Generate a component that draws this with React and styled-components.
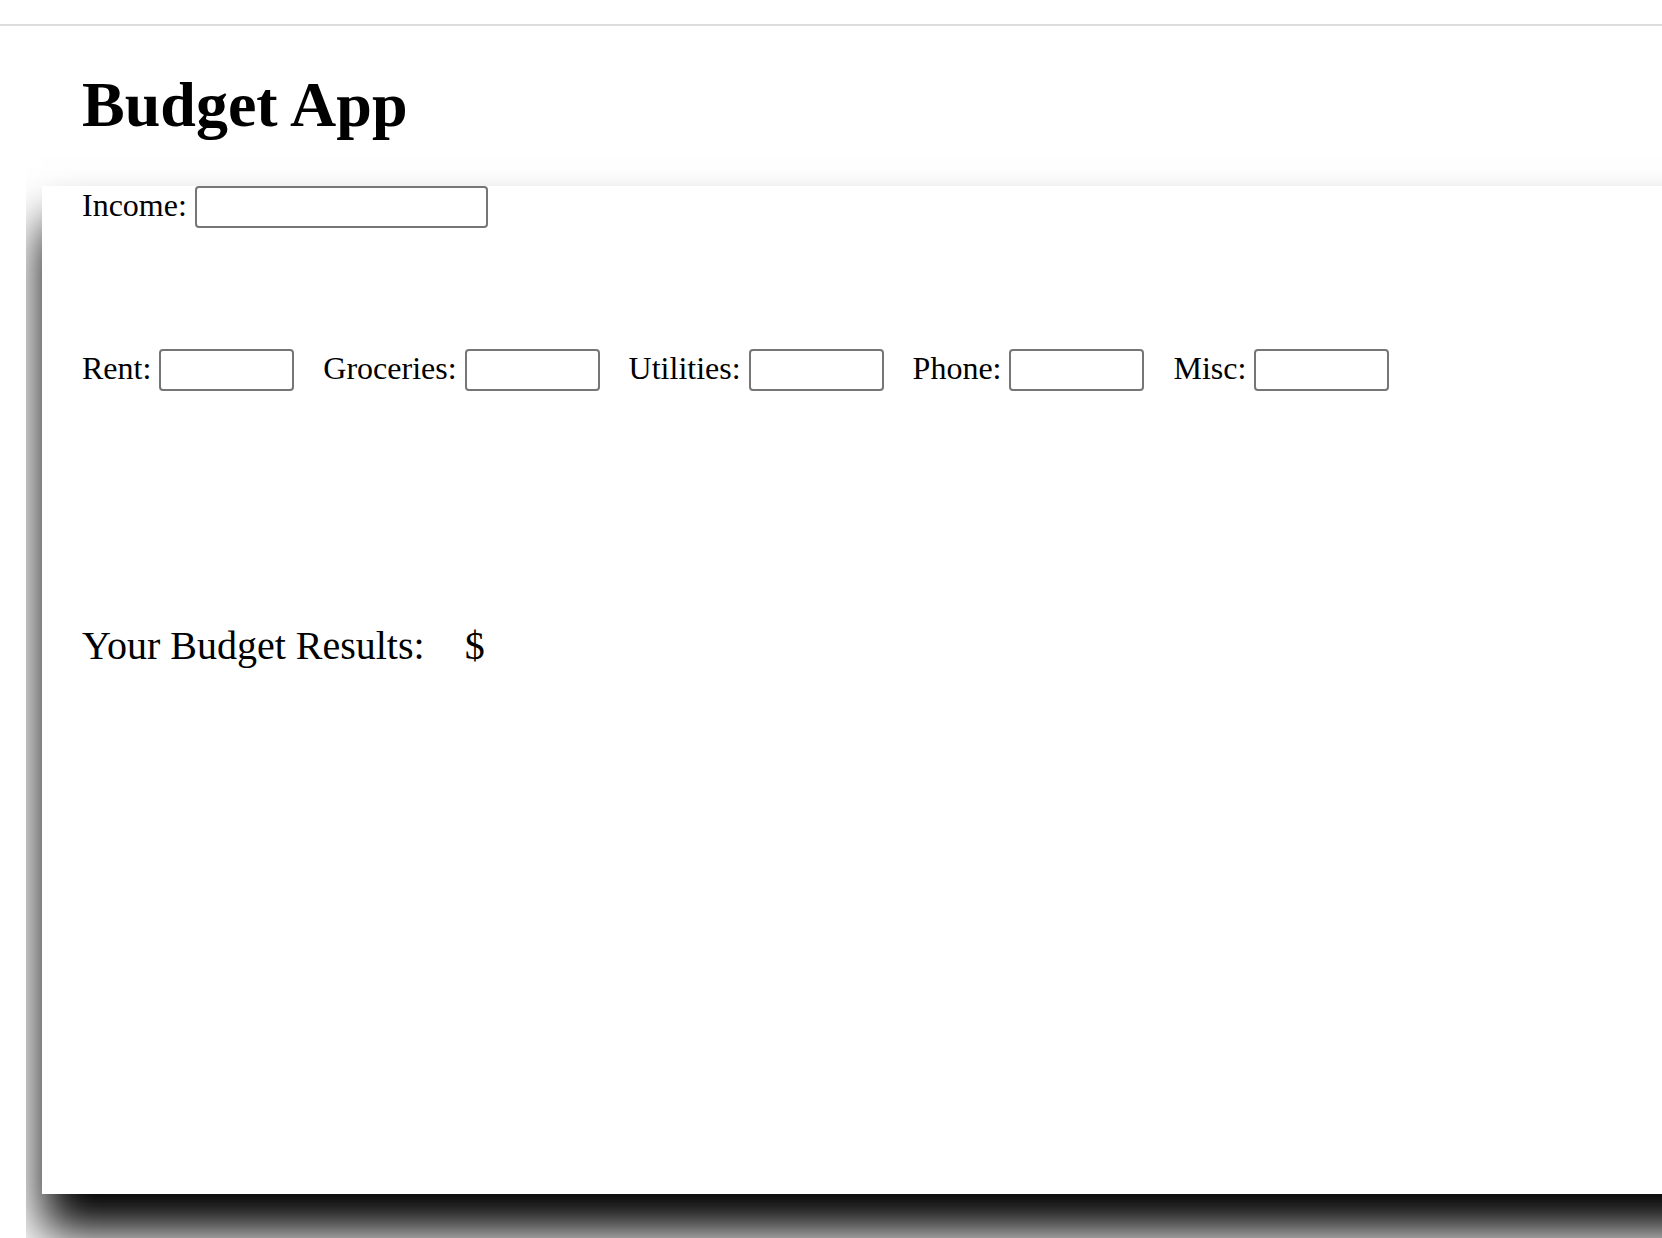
import React from 'react';
import styled, { createGlobalStyle } from 'styled-components';

const Global = createGlobalStyle`
  html, body {
    margin: 0;
    padding: 0;
    background: #ffffff;
    overflow: hidden;
  }
  body {
    font-family: "Liberation Serif", "Times New Roman", serif;
    color: #000000;
  }
`;

const Page = styled.div`
  display: flex;
  flex-direction: column;
  height: 1238px;
  overflow: hidden;
`;

const TopBar = styled.div`
  flex: none;
  height: 24px;
  border-bottom: 2px solid #dcdcdc;
`;

const Title = styled.h1`
  flex: none;
  margin: 42px 0 0 82px;
  font-size: 64px;
  font-weight: bold;
  line-height: normal;
`;

const Stage = styled.div`
  flex: 1;
  margin-left: 26px;
  padding: 44px 0 0 16px;
  overflow: hidden;
`;

const Card = styled.div`
  box-sizing: border-box;
  width: calc(100% + 80px);
  height: 1008px;
  background: #ffffff;
  box-shadow: 0 38px 46px #000000;
  padding: 0 0 0 40px;
  display: flex;
  flex-direction: column;
`;

const Row = styled.div`
  display: flex;
  align-items: baseline;
  gap: 29px;
  margin-top: ${(p) => p.$top || 0}px;
`;

const Field = styled.label`
  display: flex;
  align-items: baseline;
  gap: 8px;
  font-size: 32px;
  line-height: normal;
`;

const Input = styled.input`
  box-sizing: border-box;
  width: ${(p) => p.$w}px;
  height: 42px;
  padding: 2px 4px;
  border: 2px solid #767676;
  border-radius: 4px;
  background: #ffffff;
  font-family: "Liberation Sans", Arial, sans-serif;
  font-size: 26px;
  outline: none;
`;

const Results = styled.div`
  display: flex;
  align-items: baseline;
  margin-top: 231px;
  font-size: 40px;
  line-height: normal;
`;

const Amount = styled.span`
  margin-left: 40px;
`;

const expenses = ['Rent', 'Groceries', 'Utilities', 'Phone', 'Misc'];

export default function App() {
  return (
    <>
      <Global />
      <Page>
        <TopBar />
        <Title>Budget App</Title>
        <Stage>
          <Card>
            <Row>
              <Field>
                Income:
                <Input type="text" $w={293} />
              </Field>
            </Row>
            <Row $top={121}>
              {expenses.map((name) => (
                <Field key={name}>
                  {name}:
                  <Input type="text" $w={135} />
                </Field>
              ))}
            </Row>
            <Results>
              <span>Your Budget Results:</span>
              <Amount>$</Amount>
            </Results>
          </Card>
        </Stage>
      </Page>
    </>
  );
}
